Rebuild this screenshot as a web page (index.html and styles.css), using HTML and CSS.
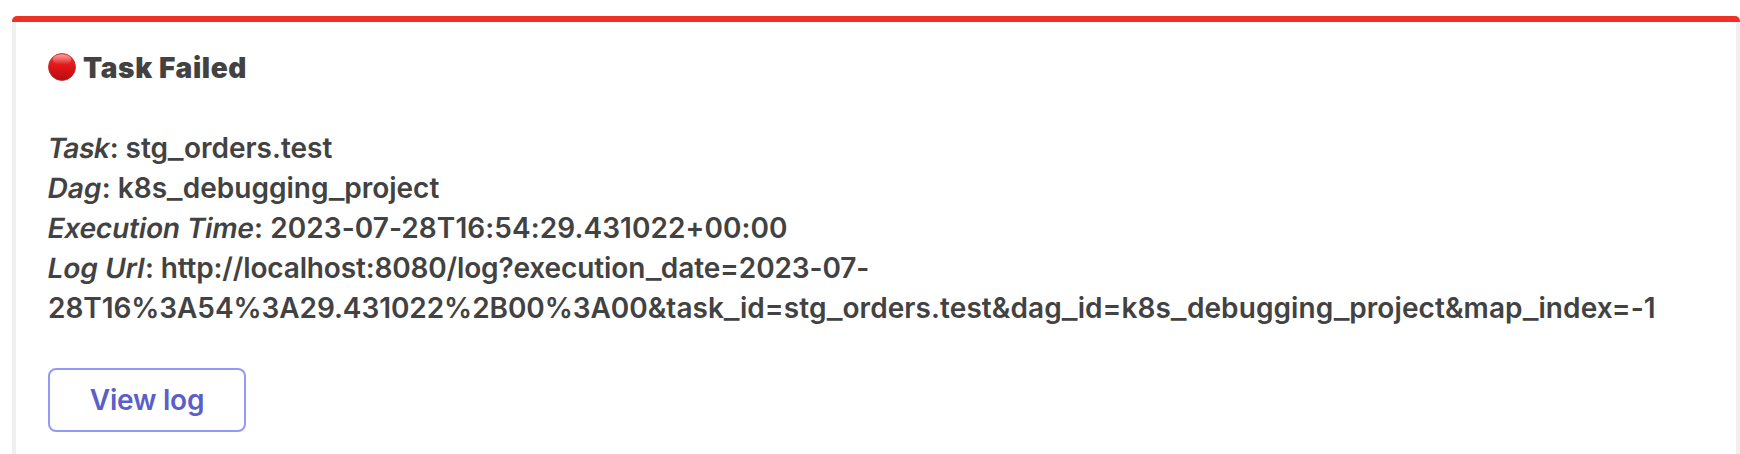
FILE: index.html
```html
<!DOCTYPE html>
<html lang="en"><head><meta charset="utf-8"><title>Task Failed</title><link rel="stylesheet" href="styles.css"></head>
<body><div class="accent"></div><main class="card">
<h1 class="title"><svg class="dot" viewBox="0 0 28 28"><defs><linearGradient id="red" x2="0" y2="1"><stop offset="0" stop-color="#ef3030"/><stop offset=".5" stop-color="#e01517"/><stop offset="1" stop-color="#b01012"/></linearGradient><linearGradient id="shine" x2="0" y2="1"><stop offset="0" stop-color="#fff" stop-opacity=".55"/><stop offset="1" stop-color="#fff" stop-opacity="0"/></linearGradient></defs><circle cx="14" cy="14" r="13.5" fill="url(#red)" stroke="#b92a2a" stroke-width=".8"/><ellipse cx="14" cy="6.5" rx="9.5" ry="5.2" fill="url(#shine)"/></svg><span class="heading">Task Failed</span></h1>
<div class="details">
<div class="line task"><em>Task</em>: stg<i>_</i>orders.test</div>
<div class="line dag"><em>Dag</em>: k8s<i>_</i>debugging<i>_</i>project</div>
<div class="line time"><em>Execution Time</em>: 2023-07-28T16:54:29.431022+00:00</div>
<div class="line url"><em>Log Url</em>: <span class="host">http://localhost:8080/log?</span>execution<i>_</i>date=2023-07-</div>
<div class="line query"><span class="stamp">28T16%3A54%3A29.431022%2B00%3A00</span>&amp;task<i>_</i>id=stg<i>_</i>orders.test&amp;dag<i>_</i>id=k8s<i>_</i>debugging<i>_</i>project&amp;map<i>_</i>index=-1</div>
</div>
<button class="button">View log</button>
</main></body></html>
```
FILE: styles.css
```css
*{box-sizing:border-box}
body{margin:0;height:454px;overflow:hidden;background:#fff;padding:16px 0 0 12px;font-family:Inter,sans-serif;color:#424242}
.accent{height:6px;background:#ee3124;border-radius:5px 5px 0 0}
.card{height:454px;border:solid #f0f0f0;border-width:0 4px;padding:26px 32px}
.title{display:flex;align-items:center;gap:7px;margin:0;height:40px;font-size:28px;font-weight:900;letter-spacing:.6px}
.dot{width:28px;height:28px;margin-top:-2px}
.details{margin-top:40px;font-size:28px;font-weight:600}
.line{height:40px;line-height:40px;white-space:nowrap}
.line em{display:inline-block;font-style:normal;transform:skewX(-10deg)}
.line i{display:inline-block;font-style:normal;margin:0 1.3px;transform:scaleX(1.2)}
.task em{letter-spacing:-.55px}
.time{letter-spacing:.07px}
.time em{letter-spacing:-.16px}
.url{letter-spacing:-.11px}
.url em{letter-spacing:0}
.host{letter-spacing:-.16px}
.query{letter-spacing:.09px}
.stamp{letter-spacing:-.07px}
.button{display:block;margin-top:40px;width:198px;height:64px;border:2px solid #9299f7;border-radius:8px;background:#fff;color:#5b5fc7;font:600 28px Inter,sans-serif;letter-spacing:-.25px}
```
